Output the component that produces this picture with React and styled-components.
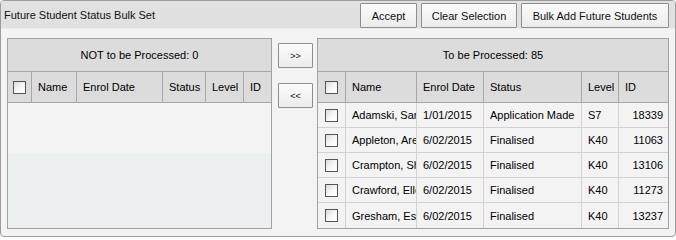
import React from 'react'
import styled, { createGlobalStyle } from 'styled-components'

const GlobalStyle = createGlobalStyle`
  html, body {
    margin: 0;
    padding: 0;
    background: #ffffff;
  }
  * {
    box-sizing: border-box;
  }
`

const leftCols = '24px 45px 86px 43px 38px 27px'
const rightCols = '28px 71px 67px 98px 37px 49px'

const Window = styled.div`
  width: 676px;
  height: 237px;
  border: 1px solid #9c9c9c;
  border-radius: 4px;
  background: #f3f3f3;
  font-family: "Liberation Sans", Arial, sans-serif;
  font-size: 11px;
  color: #000;
  overflow: hidden;
`

const TitleBar = styled.div`
  height: 28px;
  display: flex;
  align-items: center;
  justify-content: space-between;
  padding: 0 6px 0 3px;
  background: #e1e1e1;
  border-bottom: 1px solid #ececec;
`

const Title = styled.span`
  font-size: 11px;
  color: #111;
`

const Toolbar = styled.div`
  display: flex;
  gap: 4px;
  margin-top: 2px;
`

const Button = styled.button`
  height: 25px;
  width: ${p => p.$w}px;
  padding: 0;
  border: 1px solid #8e8e8e;
  border-radius: 1px;
  background: linear-gradient(#fbfbfb, #ececec);
  font-family: inherit;
  font-size: ${p => p.$small ? '9px' : '11px'};
  color: #111;
  cursor: pointer;
`

const Body = styled.div`
  display: flex;
  padding: 9px 0 0 6px;
`

const Panel = styled.div`
  width: ${p => p.$w}px;
  height: 191px;
  border: 1px solid #a2a2a2;
  display: flex;
  flex-direction: column;
  background: #f3f3f3;
`

const Caption = styled.div`
  height: 33px;
  display: flex;
  align-items: center;
  justify-content: center;
  background: #dcdcdc;
  border-bottom: 1px solid #a8a8a8;
`

const Row = styled.div`
  display: grid;
  grid-template-columns: ${p => p.$cols};
  height: ${p => p.$head ? 31 : 25}px;
  background: ${p => p.$head ? '#dcdcdc' : '#f3f3f3'};
  border-bottom: 1px solid ${p => p.$head ? '#a8a8a8' : '#d2d2d2'};
  &:last-child {
    border-bottom: none;
  }
`

const Cell = styled.div`
  display: flex;
  align-items: center;
  justify-content: ${p => p.$center ? 'center' : p.$right ? 'flex-end' : 'flex-start'};
  padding: 0 ${p => p.$right ? 5 : 0}px 0 ${p => p.$center || p.$right ? 0 : 6}px;
  border-right: 1px solid ${p => p.$head ? '#a8a8a8' : '#d2d2d2'};
  white-space: nowrap;
  overflow: hidden;
  &:last-child {
    border-right: none;
  }
`

const Check = styled.span`
  width: 13px;
  height: 13px;
  border: 1px solid #555;
  background: linear-gradient(135deg, #dcdcdc 0%, #f8f8f8 55%, #ffffff 100%);
`

const EmptyArea = styled.div`
  flex: 1;
  background: linear-gradient(#f3f3f3 0 50px, #edf0f0 50px);
`

const Mover = styled.div`
  width: 35px;
  margin: 5px 4px 0 6px;
  display: flex;
  flex-direction: column;
  gap: 15px;
`

const students = [
  { name: 'Adamski, Sarah', date: '1/01/2015', status: 'Application Made', level: 'S7', id: '18339' },
  { name: 'Appleton, Arend', date: '6/02/2015', status: 'Finalised', level: 'K40', id: '11063' },
  { name: 'Crampton, Shane', date: '6/02/2015', status: 'Finalised', level: 'K40', id: '13106' },
  { name: 'Crawford, Ellen', date: '6/02/2015', status: 'Finalised', level: 'K40', id: '11273' },
  { name: 'Gresham, Esther', date: '6/02/2015', status: 'Finalised', level: 'K40', id: '13237' },
]

const HeaderRow = ({ cols }) => (
  <Row $head $cols={cols}>
    <Cell $head $center><Check /></Cell>
    <Cell $head>Name</Cell>
    <Cell $head>Enrol Date</Cell>
    <Cell $head>Status</Cell>
    <Cell $head>Level</Cell>
    <Cell $head>ID</Cell>
  </Row>
)

export default function App() {
  return (
    <>
      <GlobalStyle />
      <Window>
        <TitleBar>
          <Title>Future Student Status Bulk Set</Title>
          <Toolbar>
            <Button $w={57}>Accept</Button>
            <Button $w={96}>Clear Selection</Button>
            <Button $w={148}>Bulk Add Future Students</Button>
          </Toolbar>
        </TitleBar>
        <Body>
          <Panel $w={265}>
            <Caption>NOT to be Processed: 0</Caption>
            <HeaderRow cols={leftCols} />
            <EmptyArea />
          </Panel>
          <Mover>
            <Button $w={35} $small>&gt;&gt;</Button>
            <Button $w={35} $small>&lt;&lt;</Button>
          </Mover>
          <Panel $w={352}>
            <Caption>To be Processed: 85</Caption>
            <HeaderRow cols={rightCols} />
            {students.map(s => (
              <Row key={s.id} $cols={rightCols}>
                <Cell $center><Check /></Cell>
                <Cell>{s.name}</Cell>
                <Cell>{s.date}</Cell>
                <Cell>{s.status}</Cell>
                <Cell>{s.level}</Cell>
                <Cell $right>{s.id}</Cell>
              </Row>
            ))}
          </Panel>
        </Body>
      </Window>
    </>
  )
}
